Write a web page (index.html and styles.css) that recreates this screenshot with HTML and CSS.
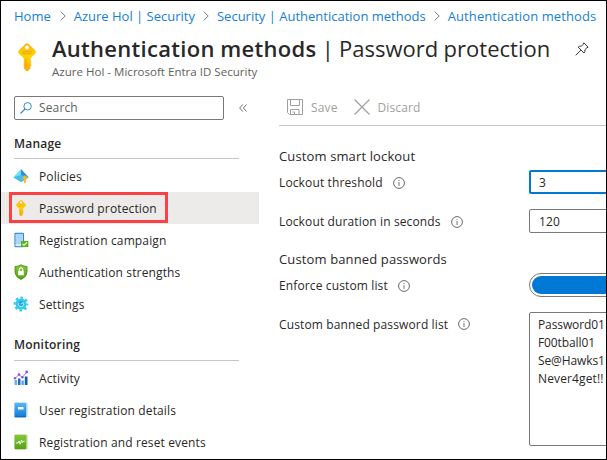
FILE: index.html
```html
<!DOCTYPE html>
<html lang="en">
<head>
<meta charset="utf-8">
<title>Authentication methods | Password protection</title>
<link rel="stylesheet" href="styles.css">
</head>
<body>
<svg class="defs" width="0" height="0">
  <defs>
    <linearGradient id="gold" x1="0" y1="0" x2="0" y2="1"><stop offset="0" stop-color="#ffb01f"/><stop offset=".45" stop-color="#ffd400"/><stop offset="1" stop-color="#fba81c"/></linearGradient>
    <linearGradient id="blue" x1="0" y1="0" x2="0" y2="1"><stop offset="0" stop-color="#5bb8f5"/><stop offset="1" stop-color="#1279d3"/></linearGradient>
    <linearGradient id="green" x1="0" y1="0" x2="0" y2="1"><stop offset="0" stop-color="#83c93a"/><stop offset="1" stop-color="#57a016"/></linearGradient>
    <symbol id="key" viewBox="0 0 18 28">
      <path fill="url(#gold)" d="M7.200 1q1.800-1.500 3.600 0l6.300 6.300q1.500 1.700 0 3.400l-4.600 4.600v1.800l1 1-1 1 1 1-1 1 1.200 1-1.200 1.200v1.900L9.800 28H8.200L5.800 25.200v-10L.900 10.700q-1.500-1.700 0-3.400z"/>
      <circle cx="9" cy="4.500" r="1.900" fill="#fff"/>
      <path fill="#e8a60b" d="M4.500 8.300h9v1h-9zm0 2h9v1h-9zM7.500 16h1v8.500h-1z"/>
    </symbol>
    <symbol id="info" viewBox="0 0 12 12">
      <circle cx="6" cy="6" r="5.400" fill="none" stroke="#6b6967" stroke-width="1"/>
      <path fill="#777573" d="M5.500 5h1v4h-1zM5.500 3h1v1.100h-1z"/>
    </symbol>
    <symbol id="chev" viewBox="0 0 6 10"><path d="M.6.600 5.200 5 .6 9.400" fill="none" stroke="#706e6c" stroke-width=".9"/></symbol>
  </defs>
</svg>
<div class="window">
  <nav class="crumbs">
    <a>Home</a><svg class="chev chev-1"><use href="#chev"/></svg>
    <a>Azure Hol | Security</a><svg class="chev chev-2"><use href="#chev"/></svg>
    <a>Security | Authentication methods</a><svg class="chev chev-3"><use href="#chev"/></svg>
    <a class="crumb-last">Authentication methods</a>
  </nav>
  <header class="head">
    <svg class="head-key"><use href="#key"/></svg>
    <div class="head-text">
      <h1><b>Authentication methods</b> <span>| Password protection</span></h1>
      <p>Azure Hol - Microsoft Entra ID Security</p>
    </div>
    <svg class="pin" viewBox="0 0 14 14"><path d="M8.800.800 13.200 5.200 12 5.600 9.900 7.700Q10.300 9.600 9 11L3.100 5.100Q4.500 3.800 6.400 4.200L8.400 2.100zM5.900 8 .7 13.300" fill="none" stroke="#3b3a39" stroke-width="1"/></svg>
  </header>
  <div class="body">
    <aside class="side">
      <div class="search-row">
        <div class="search">
          <svg viewBox="0 0 12 12"><circle cx="7.600" cy="4.300" r="3.700" fill="none" stroke="#2b88d8"/><path d="M5 7 .5 11.500" stroke="#2b88d8" stroke-width="1.100"/></svg>
          <span>Search</span>
        </div>
        <svg class="collapse" viewBox="0 0 8 8"><path d="M3.800.5.7 4l3.100 3.500M7.500.5 4.400 4l3.100 3.500" fill="none" stroke="#605e5c" stroke-width=".9"/></svg>
      </div>
      <h2 class="manage">Manage</h2>
      <ul>
        <li>
          <svg class="ico" viewBox="0 0 16 16"><path d="M8 1v13L.3 9.300z" fill="#6fe0f8"/><path d="M8 1 15.600 9.300 8 14z" fill="#2f8fdc"/><path d="M8 7 .3 9.300 8 14z" fill="#43bdec"/><path d="m8 7 7.600 2.300L8 14z" fill="#52b8f0"/><path d="M12 7.200 14.600 9.800 12.800 11.800v3L12 15.500l-1-.9v-2.800L9.300 9.900z" fill="#fdb813"/></svg>
          <span>Policies</span>
        </li>
        <li class="on"><div class="mark"></div><svg class="ico small-key"><use href="#key"/></svg><span>Password protection</span></li>
        <li>
          <svg class="ico" viewBox="0 0 16 16"><rect x="1.400" y=".8" width="9.600" height="14.400" rx="1" fill="#3887d1"/><path d="M2.400 1.900H10v10H2.400z" fill="#a9d6fb"/><path d="M2.400 11.900H10v2.300H2.400z" fill="#d6ecfd"/><path d="M8 9h7.400v6H8z" fill="#5eb31d"/><path d="m9.500 11.800 1.500 1.500 3-3" fill="none" stroke="#fff" stroke-width="1.100"/></svg>
          <span>Registration campaign</span>
        </li>
        <li>
          <svg class="ico" viewBox="0 0 16 16"><path d="M8 .8q3 1.700 6 1.700v5.700Q14 12.800 8 15.500 2 12.800 2 8.200V2.500q3 0 6-1.700z" fill="url(#green)" stroke="#438c0e" stroke-width=".8"/><path d="M5.200 7h5.600v4.300H5.200z" fill="#fff"/><path d="M6.300 7V5.600a1.700 1.700 0 0 1 3.400 0V7" fill="none" stroke="#fff" stroke-width="1.200"/></svg>
          <span>Authentication strengths</span>
        </li>
        <li>
          <svg class="ico" viewBox="0 0 16 16"><circle cx="8" cy="8" r="5.500" fill="#30c8ef"/><circle cx="8" cy="8" r="6.300" fill="none" stroke="#30c8ef" stroke-width="2.200" stroke-dasharray="2.500 2.448" stroke-dashoffset="1.250"/><circle cx="8" cy="8" r="2.700" fill="#1ba3d3"/><path d="M6 6.800a2.500 2.500 0 1 0 3.800-.3L8 8.300" fill="none" stroke="#d3f6ff" stroke-width="1"/></svg>
          <span>Settings</span>
        </li>
      </ul>
      <h2 class="monitoring">Monitoring</h2>
      <ul>
        <li>
          <svg class="ico" viewBox="0 0 16 16"><path d="M1.500 10h2.600v5H1.500z" fill="#63b5f1"/><path d="M5 8.500h2.500V15H5z" fill="#246bc0"/><path d="M8.500 10.500h2.300V15H8.500z" fill="#4ba6e8"/><path d="M11.800 6.500h2.700V15h-2.700z" fill="#175aaa"/><path d="m2 8.500 4-4L9.200 7.500 13.800 2" fill="none" stroke="#a970ed"/><g fill="#9250e2"><circle cx="2" cy="8.300" r="1.200"/><circle cx="6" cy="4.500" r="1.300"/><circle cx="9.400" cy="7.200" r="1.200"/><circle cx="13.700" cy="2" r="1.400"/></g></svg>
          <span>Activity</span>
        </li>
        <li>
          <svg class="ico" viewBox="0 0 16 16"><rect x="2" y=".8" width="12.500" height="14.400" rx="1" fill="#a9d5f5"/><rect x="1.400" y=".8" width="11.600" height="14.400" rx="1" fill="url(#blue)"/><path d="M5 5h5.500v2.500H5z" fill="#fff"/><path d="M1.600 14.800H13" stroke="#0b5ca8" stroke-width=".7"/></svg>
          <span>User registration details</span>
        </li>
        <li>
          <svg class="ico" viewBox="0 0 16 16"><rect x="2" y=".8" width="12.500" height="14.400" rx="1" fill="#a8d679"/><rect x="1.400" y=".8" width="11.600" height="14.400" rx="1" fill="url(#green)"/><path d="M3 9h2l1.200-2 .9 3.200L8.600 6l.8 2.600 1-1.300h1.300" fill="none" stroke="#fff" stroke-width=".9"/></svg>
          <span>Registration and reset events</span>
        </li>
      </ul>
    </aside>
    <main class="main">
      <div class="toolbar">
        <svg class="save" viewBox="0 0 16 16"><path d="M.5.500h15v15H2.500l-2-2zM3.500.500v6h9v-6M3.500 15v-4.500h8.500v5M5.500 13h2v2.500" fill="none" stroke="#a19f9d"/></svg>
        <span>Save</span>
        <svg class="discard" viewBox="0 0 16 16"><path d="m.5.500 15 15M15.500.500l-15 15" stroke="#a19f9d" stroke-width="1.200"/></svg>
        <span>Discard</span>
      </div>
      <h3 class="lockout">Custom smart lockout</h3>
      <div class="field threshold"><label><span>Lockout threshold</span><svg class="info"><use href="#info"/></svg></label><div class="input focus">3</div></div>
      <div class="field duration"><label><span>Lockout duration in seconds</span><svg class="info"><use href="#info"/></svg></label><div class="input">120</div></div>
      <h3 class="banned">Custom banned passwords</h3>
      <div class="field enforce"><label><span>Enforce custom list</span><svg class="info"><use href="#info"/></svg></label><div class="toggle"><i></i></div></div>
      <div class="field list"><label><span>Custom banned password list</span><svg class="info"><use href="#info"/></svg></label>
        <div class="area"><div class="tight">Password01</div><div class="tight">F00tball01</div><div class="tight">Se@Hawks1</div><div>Never4get!!</div></div></div>
    </main>
  </div>
</div>
</body>
</html>
```
FILE: styles.css
```css
* { box-sizing: border-box; }
body { margin: 0; overflow: hidden; font: 12px/18px "Open Sans", "Noto Sans", sans-serif; letter-spacing: .13px; color: #292827; background: #fff; }
svg { flex: none; display: block; }
.defs { position: absolute; }
h1, h2, h3, p, ul { margin: 0; padding: 0; font-weight: 400; }
ul { list-style: none; }
.window { width: 607px; height: 460px; border: 1px solid #000; overflow: hidden; display: flex; flex-direction: column; }

.crumbs { display: flex; align-items: center; height: 30px; padding-left: 13px; font-size: 13px; letter-spacing: 0; color: #1580d8; white-space: nowrap; }
.chev { width: 6px; height: 10px; }
.chev-1 { margin: 0 8px 0 9px; }
.chev-2, .chev-3 { margin: 0 8px; }
.crumb-last { letter-spacing: .1px; }

.head { display: flex; height: 56px; padding-left: 17px; }
.head-key { width: 18px; height: 28px; margin-top: 12px; }
.head-text { width: 498px; margin-left: 16px; white-space: nowrap; }
h1 { font-size: 22px; line-height: 30px; margin-top: 2px; letter-spacing: .02px; word-spacing: -.5px; }
h1 b { font-weight: 600; letter-spacing: .29px; }
.head p { font-size: 11.500px; line-height: 16px; margin-top: 1px; letter-spacing: .02px; color: #605e5c; }
.pin { width: 14px; height: 14px; margin: 11px 0 0 25px; }

.body { display: flex; flex: 1; }
.side { width: 258px; flex: none; padding-top: 9px; }
.search-row { display: flex; align-items: center; padding-left: 13px; }
.search { display: flex; align-items: center; width: 210px; height: 24px; padding-left: 5px; border: 1px solid #7a7876; border-radius: 2px; color: #605e5c; }
.search svg { width: 12px; height: 12px; margin-right: 7px; }
.collapse { width: 8px; height: 8px; margin-left: 15px; }
h2 { margin-left: 13px; font-size: 12px; line-height: 20px; font-weight: 600; letter-spacing: .2px; border-bottom: 1px solid #c8c6c4; width: 225px; }
.manage { margin-top: 14px; height: 25px; margin-bottom: 1px; }
.monitoring { margin-top: 15px; height: 26px; margin-bottom: 1px; }
li { position: relative; display: flex; align-items: center; height: 32px; padding-left: 12px; white-space: nowrap; }
li span, .toolbar span { padding-top: 2px; }
.ico { width: 16px; height: 16px; margin-right: 10px; }
.on { background: #edebe9; }
.mark { position: absolute; left: 8px; top: 0; width: 159px; height: 31px; border: 3px solid #fa4143; }

.main { flex: 1; padding-left: 20px; min-width: 0; overflow: hidden; white-space: nowrap; }
.toolbar { display: flex; align-items: center; height: 39px; padding: 2px 0 0 8px; border-bottom: 1px solid #c8c6c4; color: #a19f9d; }
.save, .discard { width: 16px; height: 16px; }
.save { margin-right: 8px; }
.discard { margin: 0 8px 0 16px; }
h3 { font-size: 13px; line-height: 20px; }
.lockout { margin-top: 20px; }
.field { display: flex; }
label { flex: none; display: flex; align-items: center; width: 250px; height: 24px; padding-top: 1px; }
label span { padding-top: 1px; }
.info { width: 12px; height: 12px; margin-left: 10px; }
.input { flex: none; width: 100px; height: 24px; padding-left: 9px; line-height: 24px; border: 1px solid #7a7876; border-radius: 2px; }
.focus { border: 2px solid #0078d4; padding-left: 8px; line-height: 22px; }
.threshold { margin-top: 4px; }
.duration { margin-top: 15px; }
.banned { margin-top: 16px; }
.enforce { margin-top: 4px; }
.toggle { flex: none; width: 100px; height: 24px; padding: 2px; border: 1px solid #7a7876; border-radius: 12px; }
.toggle i { display: block; height: 18px; border-radius: 9px; background: #0078d4; }
.list { margin-top: 15px; }
.list label { padding-top: 0; }
.area { flex: none; width: 100px; height: 134px; padding: 3px 0 0 8px; border: 1px solid #7a7876; border-radius: 2px; }
.tight { letter-spacing: -.1px; }
```
